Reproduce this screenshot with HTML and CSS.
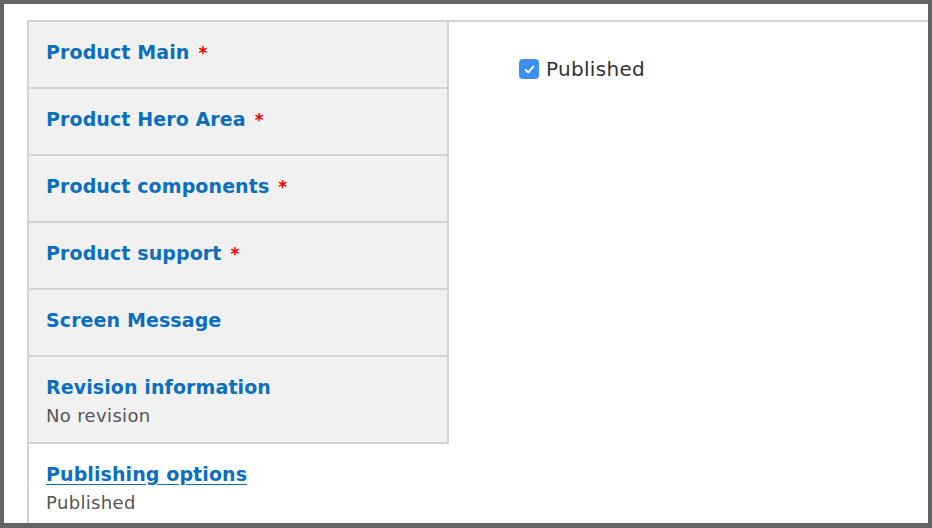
FILE: index.html
```html
<!DOCTYPE html>
<html lang="en">
<head>
    <meta charset="UTF-8">
    <meta name="viewport" content="width=device-width, initial-scale=1.0">
    <title>Edit product</title>
    <link rel="stylesheet" href="styles.css">
</head>
<body>
    <div class="frame">
        <div class="page">
            <!-- Vertical tabs -->
            <div class="vertical-tabs">
                <ul class="tab-list">
                    <li class="tab"><a href="#">Product Main</a><span class="required">*</span></li>
                    <li class="tab"><a href="#">Product Hero Area</a><span class="required">*</span></li>
                    <li class="tab"><a href="#">Product components</a><span class="required">*</span></li>
                    <li class="tab"><a href="#">Product support</a><span class="required">*</span></li>
                    <li class="tab"><a href="#">Screen Message</a></li>
                    <li class="tab tall">
                        <a href="#">Revision information</a>
                        <div class="summary">No revision</div>
                    </li>
                    <li class="tab selected">
                        <a href="#">Publishing options</a>
                        <div class="summary">Published</div>
                    </li>
                </ul>

                <!-- Active pane -->
                <div class="tab-pane">
                    <label class="checkbox">
                        <input type="checkbox" checked>
                        <span class="box">
                            <svg viewBox="0 0 20 20" width="13" height="13"><path d="M4 10.5l4 4 8-9" fill="none" stroke="#fff" stroke-width="3" stroke-linecap="round" stroke-linejoin="round"/></svg>
                        </span>
                        Published
                    </label>
                </div>
            </div>
        </div>
    </div>
</body>
</html>
```

FILE: styles.css
```css
html, body {
    margin: 0;
    padding: 0;
    height: 100%;
}
body {
    background-color: #636363;
    font-family: "DejaVu Sans", Verdana, sans-serif;
}
.frame {
    box-sizing: border-box;
    height: 100%;
    padding: 4px 4px 5px 4px;
}
.page {
    height: 100%;
    background-color: #fff;
    padding: 16px 0 0 23px;
    box-sizing: border-box;
    overflow: hidden;
}
.vertical-tabs {
    display: flex;
    border-top: 2px solid #d4d4d4;
    border-left: 2px solid #d4d4d4;
    height: 100%;
}
.tab-list {
    list-style: none;
    margin: 0;
    padding: 0;
    width: 420px;
    flex-shrink: 0;
}
.tab {
    box-sizing: border-box;
    background-color: #f1f1f1;
    border-bottom: 2px solid #d4d4d4;
    border-right: 2px solid #d4d4d4;
    height: 67px;
    padding: 17px 18px 0 17px;
    font-size: 19px;
    line-height: 26px;
}
.tab a {
    color: #0b6fbe;
    font-weight: bold;
    text-decoration: none;
    letter-spacing: 0.1px;
}
.required {
    color: #ee0000;
    font-weight: bold;
    font-size: 17px;
    margin-left: 9px;
}
.summary {
    color: #555;
    font-size: 18px;
    line-height: 32px;
    letter-spacing: 0.35px;
}
.tab.tall {
    height: 87px;
}
.tab.selected {
    background-color: #fff;
    border-bottom: none;
    border-right: none;
    height: auto;
}
.tab.selected a {
    text-decoration: underline;
    text-underline-offset: 3px;
}
.tab-pane {
    flex: 1;
    padding: 35px 0 0 70px;
}
.checkbox {
    display: flex;
    align-items: center;
    gap: 7px;
    font-size: 20px;
    letter-spacing: 0.3px;
    color: #333;
}
.checkbox input {
    display: none;
}
.box {
    width: 20px;
    height: 20px;
    border-radius: 4px;
    background-color: #3c8ff0;
    display: flex;
    align-items: center;
    justify-content: center;
}
```
